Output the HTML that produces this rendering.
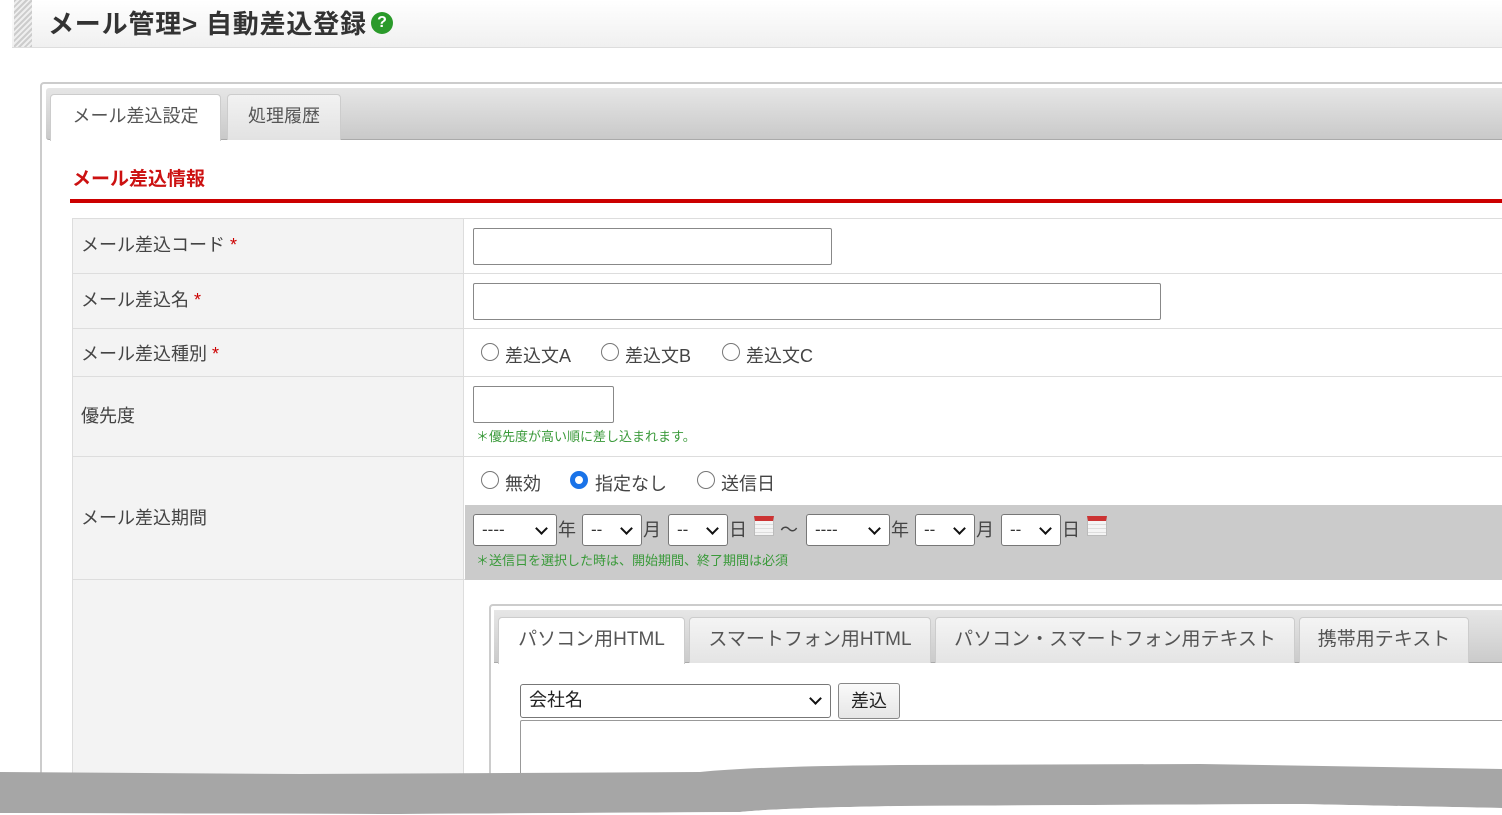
<!DOCTYPE html>
<html><head><meta charset="utf-8"><style>
*{box-sizing:border-box;margin:0;padding:0}
body{width:1502px;height:815px;overflow:hidden;background:#fff;font-family:"Liberation Sans","Noto Sans CJK JP",sans-serif;color:#333;position:relative}
.a{position:absolute}
.hdr{left:12px;top:0;width:1490px;height:48px;background:linear-gradient(#fff,#f0f0f0);border-bottom:1px solid #ddd}
.stripe{left:14px;top:0;width:18px;height:47px;background:repeating-linear-gradient(135deg,#ccc 0 2px,#eee 2px 4px)}
.title{left:48px;top:4px;font-size:26px;font-weight:bold;color:#333;letter-spacing:0.8px;white-space:nowrap}
.q{left:371px;top:12px;width:22px;height:22px;border-radius:50%;background:#2a9a2a;color:#fff;font-size:16px;font-weight:bold;text-align:center;line-height:22px}
.outer{left:40px;top:82px;width:1480px;height:720px;border:2px solid #ccc;border-radius:4px}
.tabbar{left:46px;top:88px;width:1460px;height:52px;background:linear-gradient(#e6e6e6,#c9c9c9);border-radius:3px;border-bottom:1px solid #aaa}
.tab{height:46px;border:1px solid #ccc;border-bottom:none;border-radius:4px 4px 0 0;font-size:18px;color:#555;text-align:center;line-height:42px}
.lbl{font-size:18px;color:#444}
.row{left:72px;width:1440px;border-bottom:1px solid #ddd}
.lc{left:72px;width:392px;background:#f3f3f3;border-right:1px solid #ddd;border-left:1px solid #ddd}
.inp{border:1px solid #888;border-radius:2px;background:#fff}
.sel{border:1px solid #777;border-radius:3px;background:#fff;height:32px;font-size:17px;padding-left:8px;line-height:30px}
.sel:after{content:"";position:absolute;right:10px;top:9px;width:7px;height:7px;border-right:2.5px solid #111;border-bottom:2.5px solid #111;transform:rotate(45deg)}
.radio{width:18px;height:18px;border:1.5px solid #777;border-radius:50%;background:#fff}
.cal{width:20px;height:20px;border:1px solid #bbb;background:repeating-linear-gradient(#f4f4f4 0 3px,#ddd 3px 4px);border-top:5px solid #c33}
.g{font-size:13px;color:#3a9a3a}
.t2{height:46px;border:1px solid #ccc;border-bottom:none;border-radius:4px 4px 0 0;font-size:19px;color:#555;line-height:44px;text-align:center;background:linear-gradient(#f4f4f4,#e4e4e4)}
</style></head><body>
<div class="a hdr"></div><div class="a stripe"></div>
<div class="a title">メール管理&gt; 自動差込登録</div>
<div class="a q">?</div>
<div class="a outer"></div>
<div class="a tabbar"></div>
<div class="a tab" style="left:50px;top:94px;width:171px;background:#fff;height:47px">メール差込設定</div>
<div class="a tab" style="left:227px;top:94px;width:114px;background:linear-gradient(#f2f2f2,#e2e2e2)">処理履歴</div>
<div class="a" style="left:72px;top:164px;font-size:19px;font-weight:bold;color:#cc1111">メール差込情報</div>
<div class="a" style="left:70px;top:199px;width:1440px;height:4px;background:#cc0000"></div>
<div class="a" style="left:72px;top:218px;width:1440px;border-top:1px solid #ddd"></div>
<div class="a lc" style="top:219px;height:560px"></div>
<div class="a row" style="top:219px;height:55px"></div>
<div class="a row" style="top:274px;height:55px"></div>
<div class="a row" style="top:329px;height:48px"></div>
<div class="a row" style="top:377px;height:80px"></div>
<div class="a row" style="top:457px;height:123px"></div>
<div class="a lbl" style="left:81px;top:231px">メール差込コード <span style="color:#c00">*</span></div>
<div class="a lbl" style="left:81px;top:286px">メール差込名 <span style="color:#c00">*</span></div>
<div class="a lbl" style="left:81px;top:340px">メール差込種別 <span style="color:#c00">*</span></div>
<div class="a lbl" style="left:81px;top:402px">優先度</div>
<div class="a lbl" style="left:81px;top:504px">メール差込期間</div>
<div class="a inp" style="left:473px;top:228px;width:359px;height:37px"></div>
<div class="a inp" style="left:473px;top:283px;width:688px;height:37px"></div>
<div class="a radio" style="left:481px;top:343px"></div><div class="a lbl" style="left:505px;top:342px">差込文A</div>
<div class="a radio" style="left:601px;top:343px"></div><div class="a lbl" style="left:625px;top:342px">差込文B</div>
<div class="a radio" style="left:722px;top:343px"></div><div class="a lbl" style="left:746px;top:342px">差込文C</div>
<div class="a inp" style="left:473px;top:386px;width:141px;height:37px"></div>
<div class="a g" style="left:476px;top:426px">＊優先度が高い順に差し込まれます。</div>
<div class="a radio" style="left:481px;top:471px"></div><div class="a lbl" style="left:505px;top:470px">無効</div>
<div class="a radio" style="left:570px;top:471px;border:5px solid #1a73e8"></div><div class="a lbl" style="left:595px;top:470px">指定なし</div>
<div class="a radio" style="left:697px;top:471px"></div><div class="a lbl" style="left:721px;top:470px">送信日</div>
<div class="a" style="left:465px;top:505px;width:1040px;height:75px;background:#cbcbcb"></div>
<div class="a sel" style="left:473px;top:514px;width:84px">----</div><div class="a lbl" style="left:558px;top:516px">年</div>
<div class="a sel" style="left:582px;top:514px;width:60px">--</div><div class="a lbl" style="left:643px;top:516px">月</div>
<div class="a sel" style="left:668px;top:514px;width:60px">--</div><div class="a lbl" style="left:729px;top:516px">日</div>
<div class="a cal" style="left:754px;top:516px"></div><div class="a lbl" style="left:780px;top:516px">～</div>
<div class="a sel" style="left:806px;top:514px;width:84px">----</div><div class="a lbl" style="left:891px;top:516px">年</div>
<div class="a sel" style="left:915px;top:514px;width:60px">--</div><div class="a lbl" style="left:976px;top:516px">月</div>
<div class="a sel" style="left:1001px;top:514px;width:60px">--</div><div class="a lbl" style="left:1062px;top:516px">日</div>
<div class="a cal" style="left:1087px;top:516px"></div>
<div class="a g" style="left:476px;top:550px">＊送信日を選択した時は、開始期間、終了期間は必須</div>
<div class="a" style="left:489px;top:604px;width:1020px;height:200px;border:2px solid #ccc;border-radius:4px"></div>
<div class="a" style="left:494px;top:610px;width:1010px;height:53px;background:linear-gradient(#e6e6e6,#cbcbcb);border-bottom:1px solid #aaa"></div>
<div class="a t2" style="left:498px;top:617px;width:187px;background:#fff;height:47px">パソコン用HTML</div>
<div class="a t2" style="left:689px;top:617px;width:242px">スマートフォン用HTML</div>
<div class="a t2" style="left:935px;top:617px;width:360px">パソコン・スマートフォン用テキスト</div>
<div class="a t2" style="left:1299px;top:617px;width:170px">携帯用テキスト</div>
<div class="a sel" style="left:520px;top:684px;width:311px;height:34px;font-size:18px;color:#222">会社名</div>
<div class="a" style="left:838px;top:683px;width:62px;height:36px;border:1px solid #888;border-radius:3px;background:linear-gradient(#fafafa,#e6e6e6);font-size:18px;text-align:center;line-height:34px;color:#222">差込</div>
<div class="a inp" style="left:520px;top:720px;width:990px;height:80px;border-color:#999"></div>
<svg class="a" style="left:0;top:0" width="1502" height="815"><path d="M0 772 L300 774 L700 772 Q760 766 900 765 L1200 764 L1502 769 L1502 808 L1300 804 L900 806 Q780 808 740 812 L400 814 L0 813 Z" fill="#a6a6a6"/><path d="M0 813 L400 814 L740 812 Q780 808 900 806 L1300 804 L1502 808 L1502 815 L0 815Z" fill="#fff"/></svg>
</body></html>
